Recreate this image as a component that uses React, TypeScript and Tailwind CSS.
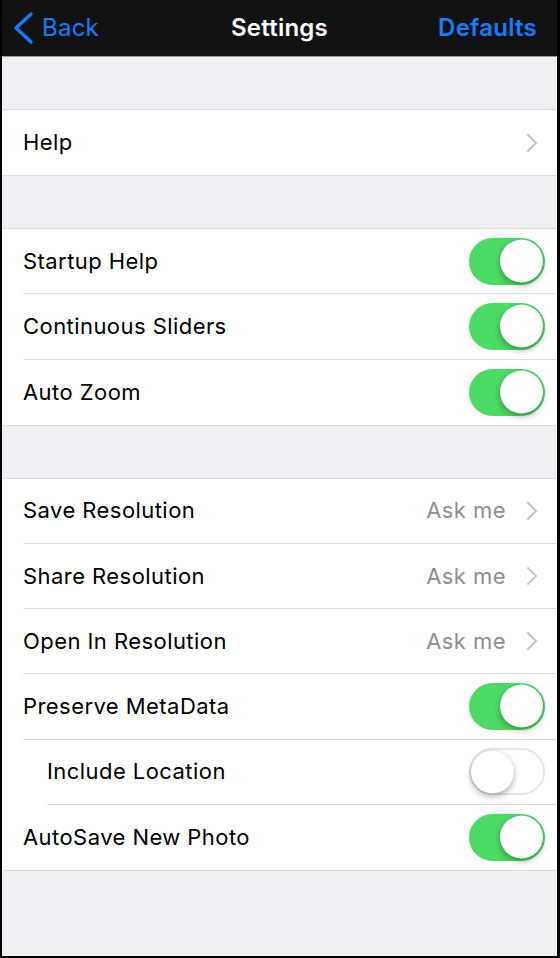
type Row = {
  label: string;
  value?: string;
  chevron?: boolean;
  toggle?: boolean;
  on?: boolean;
  indent?: boolean;
};

const GROUPS: Row[][] = [
  [{ label: "Help", chevron: true }],
  [
    { label: "Startup Help", toggle: true, on: true },
    { label: "Continuous Sliders", toggle: true, on: true },
    { label: "Auto Zoom", toggle: true, on: true },
  ],
  [
    { label: "Save Resolution", value: "Ask me", chevron: true },
    { label: "Share Resolution", value: "Ask me", chevron: true },
    { label: "Open In Resolution", value: "Ask me", chevron: true },
    { label: "Preserve MetaData", toggle: true, on: true },
    { label: "Include Location", toggle: true, on: false, indent: true },
    { label: "AutoSave New Photo", toggle: true, on: true },
  ],
];

function Chevron() {
  return (
    <svg width="12" height="20" viewBox="0 0 12 20" className="ml-[20px] mr-[19px]">
      <path d="M2 2 L10 10 L2 18" fill="none" stroke="#c7c7cc" strokeWidth="2.4" strokeLinecap="round" strokeLinejoin="round" />
    </svg>
  );
}

function Toggle({ on }: { on?: boolean }) {
  return (
    <div
      className={`relative mr-[12px] h-[47px] w-[76px] rounded-full ${
        on ? "bg-[#4cd964]" : "bg-white border-2 border-[#e5e5ea]"
      }`}
    >
      <div
        className={`absolute top-1/2 h-[43px] w-[43px] -translate-y-1/2 rounded-full bg-white shadow-[0_3px_6px_rgba(0,0,0,0.3),0_0_1px_rgba(0,0,0,0.2)] ${
          on ? "right-[2px]" : "left-0"
        }`}
      />
    </div>
  );
}

export default function App() {
  return (
    <div
      className="flex h-[958px] w-[560px] flex-col bg-black pl-[2px] pr-[3px] pb-[2px]"
      style={{ fontFamily: "Inter, 'Liberation Sans', sans-serif" }}
    >
      {/* Nav bar */}
      <div className="grid h-[57px] shrink-0 grid-cols-3 items-center bg-[#121212] border-b border-[#9a9a9a]">
        <div className="flex items-center text-[#157efb]">
          <svg width="24" height="34" viewBox="0 0 24 34" className="ml-[9px]">
            <path d="M20 3 L5 17 L20 31" fill="none" stroke="#157efb" strokeWidth="3.4" strokeLinecap="round" strokeLinejoin="round" />
          </svg>
          <span className="ml-[7px] text-[24px] tracking-[0.01em]">Back</span>
        </div>
        <div className="text-center text-[24px] font-semibold tracking-[0.01em] text-white">Settings</div>
        <div className="mr-[20px] text-right text-[24px] font-semibold tracking-[0.01em] text-[#157efb]">Defaults</div>
      </div>

      <div className="flex flex-1 flex-col bg-[#efeff4]">
        {GROUPS.map((group, gi) => (
          <div key={gi} className="mt-[52px] border-y border-[#d9d9de] bg-white">
            {group.map((row, ri) => (
              <div key={row.label} className={`flex h-[65.2px] items-center ${row.indent ? "pl-[45px]" : "pl-[21px]"}`}>
                <div
                  className={`flex h-full flex-1 items-center ${
                    ri < group.length - 1 ? "border-b border-[#dcdce0]" : ""
                  }`}
                >
                  <span className="flex-1 text-[22px] tracking-[0.02em] text-black">{row.label}</span>
                  {row.value && <span className="text-[22px] tracking-[0.02em] text-[#8e8e93]">{row.value}</span>}
                  {row.chevron && <Chevron />}
                  {row.toggle && <Toggle on={row.on} />}
                </div>
              </div>
            ))}
          </div>
        ))}
      </div>
    </div>
  );
}
